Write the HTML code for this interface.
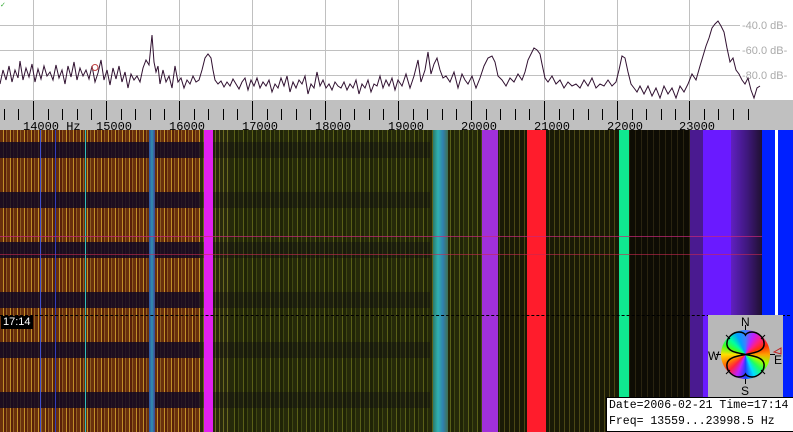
<!DOCTYPE html><html><head><style>
*{margin:0;padding:0}body{width:793px;height:432px;overflow:hidden;background:#fff;position:relative;font-family:"Liberation Sans",sans-serif}
.a{position:absolute}
#spg{left:0;top:130px;width:793px;height:302px;background:#1c1c04;overflow:hidden}
</style></head><body>
<svg class="a" style="left:0;top:0" width="793" height="100">
<g stroke="#c0c0c0" stroke-width="1">
<line x1="33.5" y1="0" x2="33.5" y2="100"/><line x1="106.5" y1="0" x2="106.5" y2="100"/><line x1="179.5" y1="0" x2="179.5" y2="100"/><line x1="252.5" y1="0" x2="252.5" y2="100"/><line x1="325.5" y1="0" x2="325.5" y2="100"/><line x1="398.5" y1="0" x2="398.5" y2="100"/><line x1="471.5" y1="0" x2="471.5" y2="100"/><line x1="544.5" y1="0" x2="544.5" y2="100"/><line x1="617.5" y1="0" x2="617.5" y2="100"/><line x1="689.5" y1="0" x2="689.5" y2="100"/>
<line x1="0" y1="25.5" x2="740" y2="25.5"/><line x1="0" y1="50.5" x2="740" y2="50.5"/><line x1="0" y1="75.5" x2="740" y2="75.5"/>
</g>
<g fill="#aaa" font-size="11"><text x="742" y="29">-40.0 dB-</text><text x="742" y="54">-60.0 dB-</text><text x="742" y="79">-80.0 dB-</text></g>
<polyline fill="none" stroke="#301030" stroke-width="1" points="0,84 3,70 6,80 9,66 12,82 15,70 18,78 20,61 23,80 26,68 29,77 32,64 35,82 38,69 41,79 44,66 47,76 50,72 53,80 56,65 59,78 62,70 65,84 68,66 71,77 74,62 77,80 80,68 83,76 86,70 89,79 92,66 95,82 98,73 101,60 104,80 107,70 110,85 113,68 116,79 119,66 122,82 125,72 128,88 131,74 134,80 137,76 140,82 143,68 146,60 149,65 152,35 154,62 156,72 158,66 160,84 163,70 166,82 169,76 172,88 175,66 178,82 181,78 184,88 187,80 190,84 193,76 196,82 199,80 202,70 205,58 208,54 211,58 213,70 215,80 218,84 221,81 224,87 227,82 230,86 233,79 236,84 239,89 242,82 245,78 248,90 251,80 254,86 257,78 260,88 263,82 266,86 269,80 272,92 275,84 278,88 281,78 284,86 287,76 290,92 293,82 296,88 299,80 302,84 305,76 308,94 311,84 314,88 317,72 320,86 323,80 326,88 329,84 332,90 335,82 338,86 341,88 344,82 347,90 350,84 353,88 356,80 359,94 362,84 365,88 368,80 371,92 374,84 377,86 380,76 383,88 386,80 389,86 392,78 395,90 398,80 402,86 406,74 410,88 414,76 418,60 421,82 425,70 428,52 431,74 434,64 437,58 440,70 443,78 446,76 450,82 454,72 458,88 462,74 465,80 468,84 472,76 476,88 480,78 484,66 488,58 492,56 495,62 498,76 502,80 506,86 510,78 514,82 518,74 522,80 525,72 528,60 531,54 534,48 537,50 540,54 542,64 545,78 548,82 552,76 556,84 560,80 564,88 568,82 572,86 576,84 580,88 584,80 588,86 592,78 596,88 600,84 604,86 608,80 612,86 616,82 619,70 622,56 625,58 628,72 631,84 634,88 637,92 640,86 644,94 648,86 652,96 656,88 660,98 664,86 668,94 672,88 676,98 680,86 684,92 688,84 692,74 696,80 700,66 703,56 706,46 709,38 712,28 715,24 718,21 721,26 724,32 727,48 730,62 733,58 736,70 739,74 742,80 745,84 748,78 751,90 754,98 757,88 760,86"/>
<circle cx="95" cy="67.5" r="3" fill="none" stroke="#c04040"/>
<text x="0" y="7" fill="#3a3" font-size="7">✓</text>
</svg>
<div class="a" style="left:0;top:100px;width:793px;height:30px;background:#c0c0c0"></div>
<svg class="a" style="left:0;top:100px" width="793" height="30">
<g stroke="#000" stroke-width="1">
<path d="M4.5 9V20M18.5 9V20M33.5 1V20M48.5 9V20M62.5 9V20M77.5 9V20M91.5 9V20M106.5 1V20M121.5 9V20M135.5 9V20M150.5 9V20M164.5 9V20M179.5 1V20M194.5 9V20M208.5 9V20M223.5 9V20M237.5 9V20M252.5 1V20M267.5 9V20M281.5 9V20M296.5 9V20M310.5 9V20M325.5 1V20M340.5 9V20M354.5 9V20M369.5 9V20M383.5 9V20M398.5 1V20M413.5 9V20M427.5 9V20M442.5 9V20M456.5 9V20M471.5 1V20M486.5 9V20M500.5 9V20M515.5 9V20M529.5 9V20M544.5 1V20M559.5 9V20M573.5 9V20M588.5 9V20M602.5 9V20M617.5 1V20M632.5 9V20M646.5 9V20M661.5 9V20M675.5 9V20M689.5 1V20M704.5 9V20M718.5 9V20M733.5 9V20M748.5 9V20"/>
</g>
<g font-family="Liberation Mono,monospace" font-size="12" fill="#000">
<text x="23" y="30">14000 Hz</text><text x="96" y="30">15000</text><text x="169" y="30">16000</text><text x="242" y="30">17000</text><text x="315" y="30">18000</text><text x="388" y="30">19000</text><text x="461" y="30">20000</text><text x="534" y="30">21000</text><text x="607" y="30">22000</text><text x="679" y="30">23000</text>
</g></svg>
<div id="spg" class="a">
<div class="a" style="left:0;top:0;width:200px;height:302px;background:repeating-linear-gradient(90deg,#6a300c 0 3px,#c09028 3px 4px,#5a2008 4px 6px,#906020 6px 7px)"></div>
<div class="a" style="left:200px;top:0;width:30px;height:302px;background:repeating-linear-gradient(90deg,#2a2a0c 0 3px,#6a6a20 3px 4px)"></div>
<div class="a" style="left:230px;top:0;width:460px;height:302px;background:repeating-linear-gradient(90deg,#262a0a 0 4px,#5a6018 4px 5px,#202406 5px 8px,#404812 8px 9px)"></div>
<div class="a" style="left:500px;top:0;width:120px;height:302px;background:repeating-linear-gradient(90deg,#1a1a06 0 4px,#4a4614 4px 5px)"></div>
<div class="a" style="left:630px;top:0;width:60px;height:302px;background:repeating-linear-gradient(90deg,#0e0c04 0 5px,#2a2410 5px 6px)"></div>
<div class="a" style="left:0;top:0;width:200px;height:302px;background:repeating-linear-gradient(180deg,transparent 0 12px,rgba(12,6,36,.82) 12px 28px,transparent 28px 50px)"></div>
<div class="a" style="left:200px;top:0;width:230px;height:302px;background:repeating-linear-gradient(180deg,transparent 0 12px,rgba(10,8,20,.35) 12px 28px,transparent 28px 50px)"></div>
<div class="a" style="left:55px;width:1px;top:0;height:302px;background:#3040c0"></div>
<div class="a" style="left:85px;width:1px;top:0;height:302px;background:#30c0c0"></div>
<div class="a" style="left:40px;width:1px;top:0;height:302px;background:#4050d0"></div>
<div class="a" style="left:149px;width:6px;top:0;height:302px;background:linear-gradient(90deg,#3050a0,#3090b0,#404090)"></div>
<div class="a" style="left:204px;width:9px;top:0;height:302px;background:#e020f0"></div>
<div class="a" style="left:433px;width:15px;top:0;height:302px;background:linear-gradient(90deg,#2a7a6a,#30b0b0,#3080b0,#407050)"></div>
<div class="a" style="left:482px;width:16px;top:0;height:302px;background:#a030d8"></div>
<div class="a" style="left:527px;width:19px;top:0;height:302px;background:#ff1c2c"></div>
<div class="a" style="left:619px;width:10px;top:0;height:302px;background:#10e890"></div>
<div class="a" style="left:690px;width:14px;top:0;height:302px;background:#4a1a90"></div>
<div class="a" style="left:703px;width:28px;top:0;height:302px;background:#6a1aff"></div>
<div class="a" style="left:731px;width:31px;top:0;height:302px;background:linear-gradient(90deg,#6020c0,#401880 50%,#201030)"></div>
<div class="a" style="left:762px;width:31px;top:0;height:302px;background:#0020ff"></div>
<div class="a" style="left:775px;width:3px;top:0;height:302px;background:#fff"></div>
<div class="a" style="left:0;top:106px;width:762px;height:1px;background:rgba(200,40,120,.7)"></div>
<div class="a" style="left:0;top:124px;width:762px;height:1px;background:rgba(200,40,80,.6)"></div>
<div class="a" style="left:0;top:185px;width:790px;border-top:1px dashed #000"></div>
<div class="a" style="left:1px;top:186px;background:#000;color:#fff;font-size:11px;padding:0 2px;line-height:13px">17:14</div>
</div>
<div class="a" style="left:708px;top:315px;width:75px;height:82px;background:#b8b8b8"></div>
<div class="a" style="left:721px;top:330px;width:49px;height:49px;border-radius:50%;background:conic-gradient(from 0deg,#4080ff,#c020ff,#ff2080,#ff3000,#ffa000,#a0ff00,#20ff60,#00e0ff,#2040ff,#c020ff,#ff2040,#ff8000,#ffe000,#40ff20,#00ffa0,#00a0ff,#4080ff)"></div>
<svg class="a" style="left:708px;top:315px" width="75" height="82">
<path d="M37.5 39.5C30 38 20 37 19 30 18 22 26 17 31 17 35 17 37 19 37.5 20 38 19 40 17 44 17 49 17 57 22 56 30 55 37 45 38 37.5 39.5 30 41 20 42 19 49 18 57 26 62 31 62 35 62 37 60 37.5 59 38 60 40 62 44 62 49 62 57 57 56 49 55 42 45 41 37.5 39.5Z" fill="none" stroke="#000" stroke-width="1.5"/>
<g stroke="#000"><path d="M37.5 10V15M37.5 64V69M8 39.5H13M62 39.5H67M18 20L22 24M57 20L53 24M18 59L22 55M57 59L53 55"/></g>
<g font-size="12" fill="#000"><text x="33" y="11">N</text><text x="33" y="80">S</text><text x="0" y="45">W</text><text x="66" y="49">E</text></g>
<path d="M66 37L73 33V39Z" fill="none" stroke="#c02020"/>
</svg>
<div class="a" style="left:606px;top:397px;width:185px;height:33px;background:#fff;border:1px solid #000;font-family:'Liberation Mono',monospace;font-size:11.5px;line-height:16px;padding-left:2px;white-space:pre">Date=2006-02-21 Time=17:14
Freq= 13559...23998.5 Hz</div>
</body></html>
